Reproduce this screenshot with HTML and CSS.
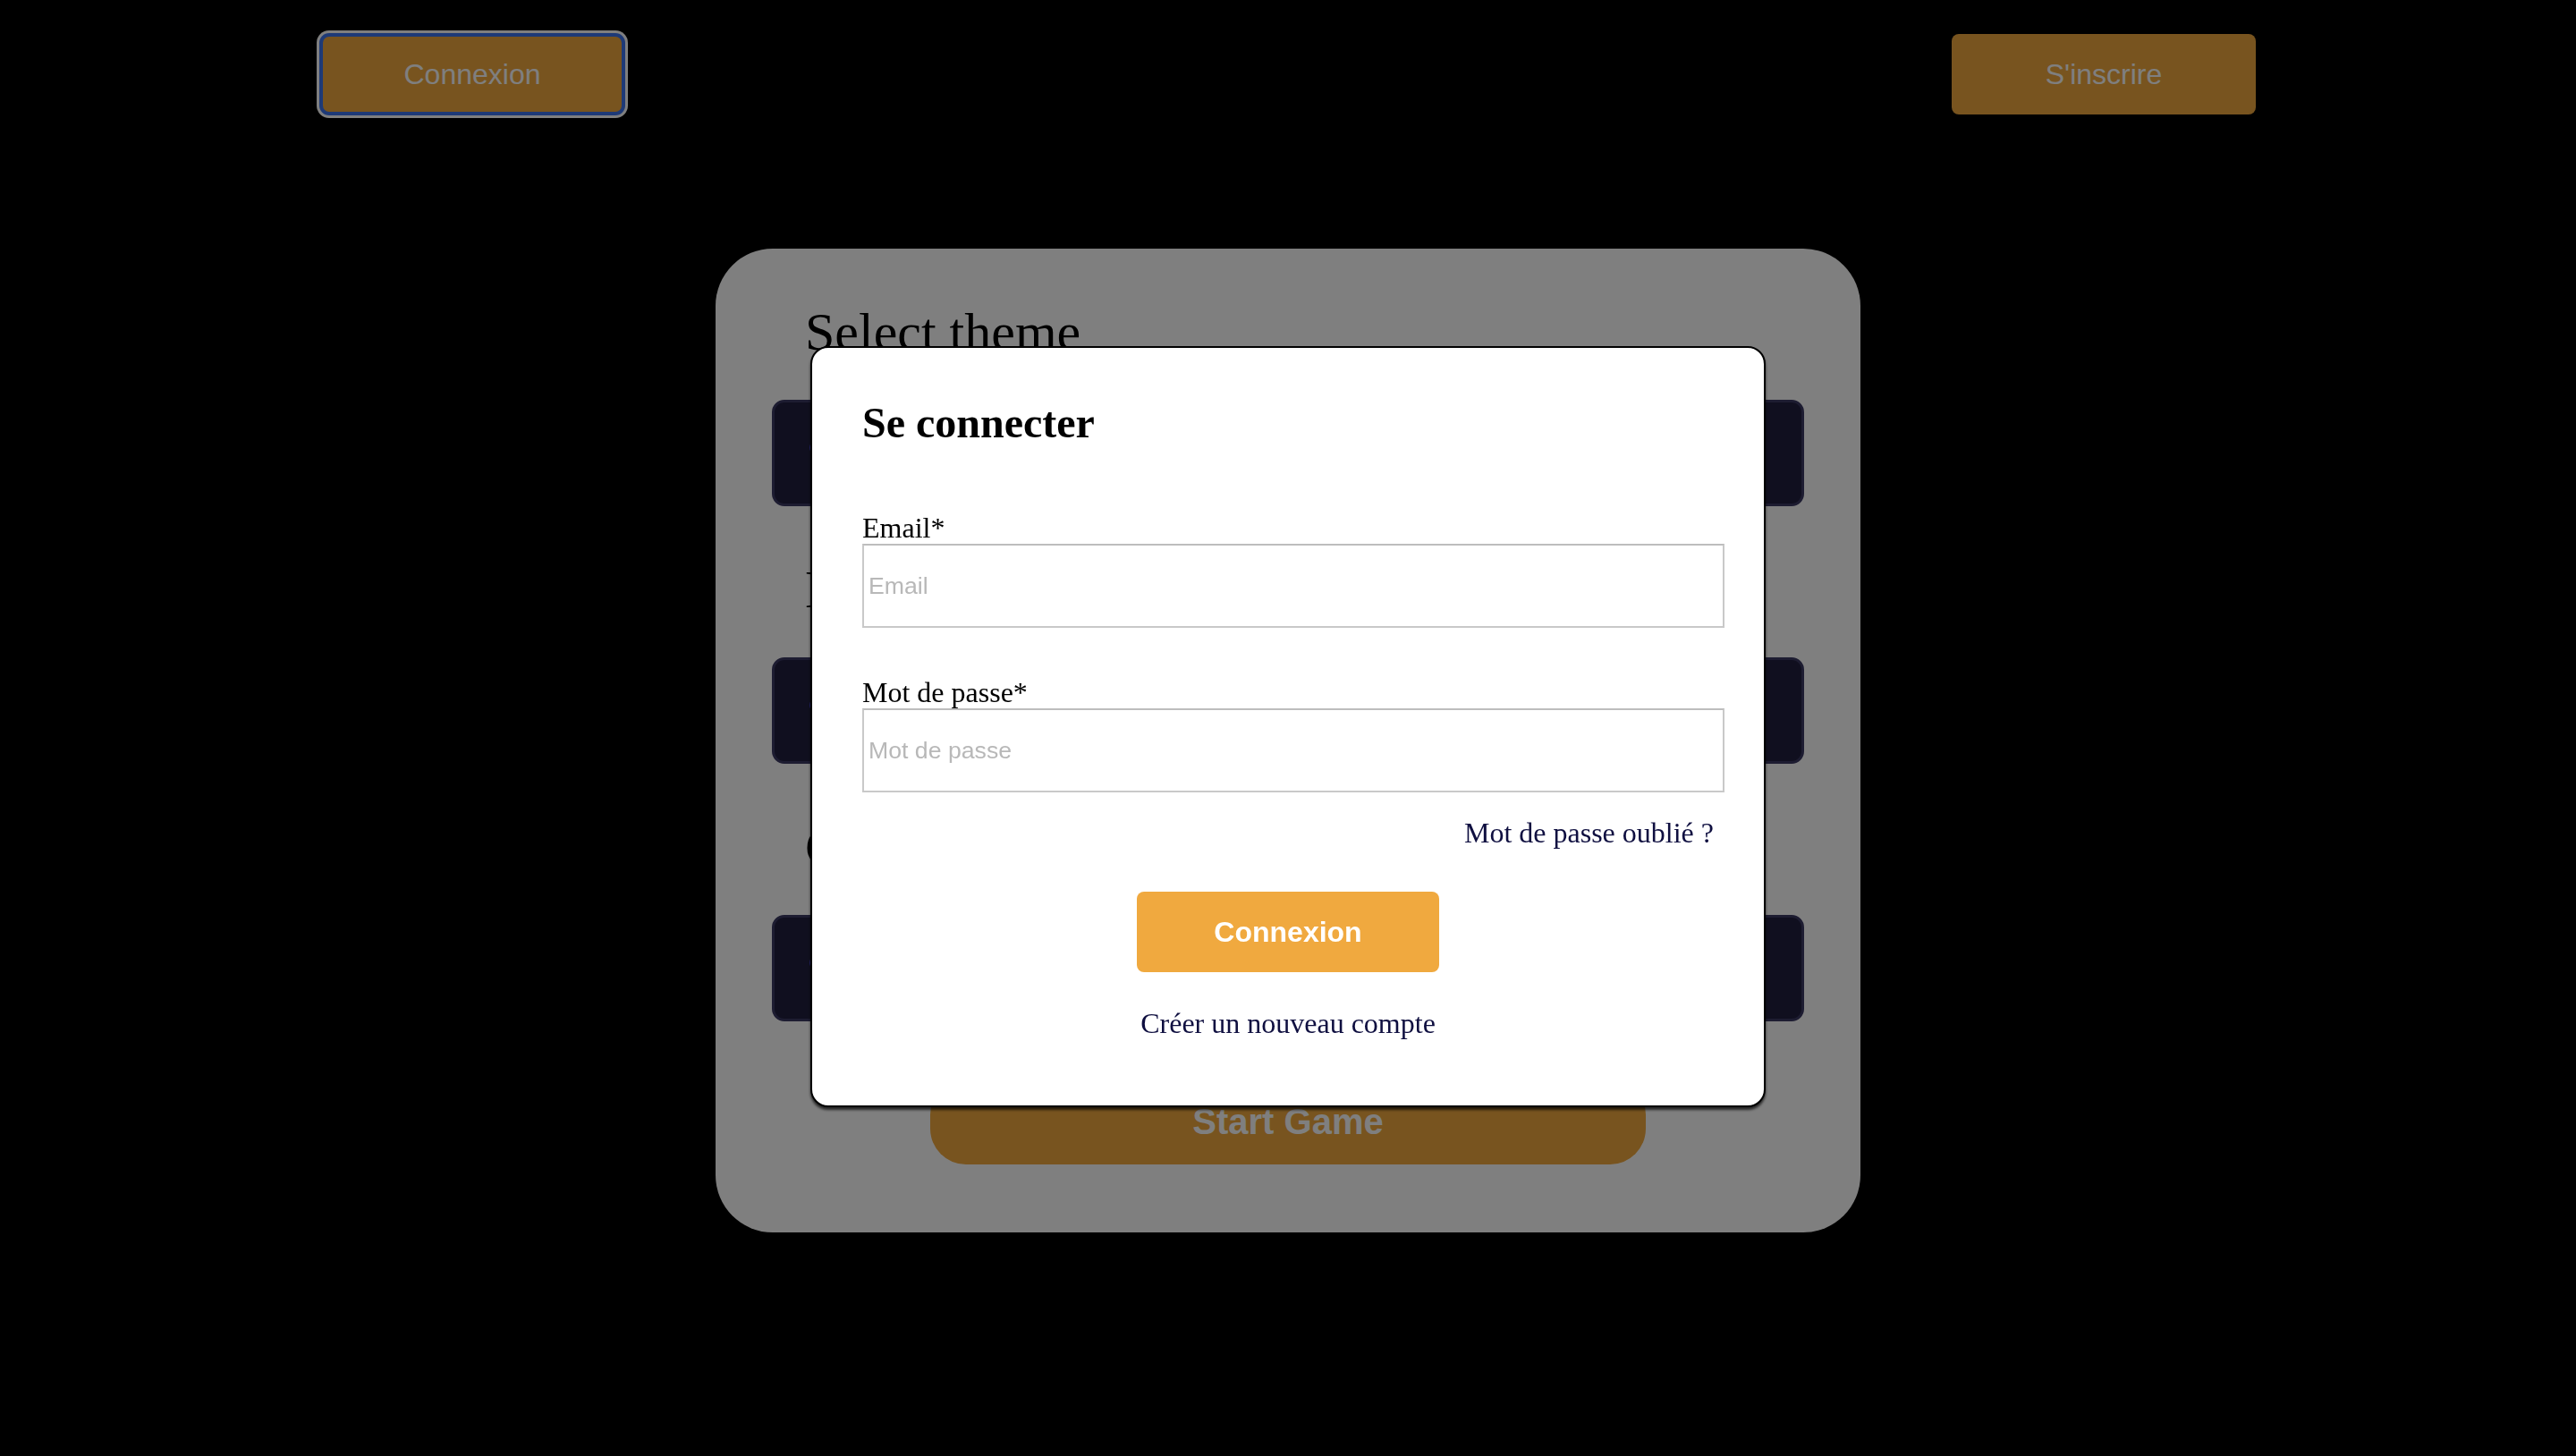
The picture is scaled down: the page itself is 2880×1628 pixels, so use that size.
FILE: index.html
```html
<!DOCTYPE html>
<html lang="fr">
<head>
<meta charset="utf-8">
<title>Quiz</title>
<link rel="stylesheet" href="styles.css">
</head>
<body>
<header class="topbar">
  <button class="top-btn is-focused" type="button">Connexion</button>
  <button class="top-btn" type="button">S'inscrire</button>
</header>

<main class="card">
  <h2 class="section-title">Select theme</h2>
  <button class="option" type="button" aria-label="theme"><span class="option-mark"></span></button>
  <h2 class="section-title">Difficulty</h2>
  <button class="option" type="button" aria-label="difficulty"><span class="option-mark"></span></button>
  <h2 class="section-title">Game mode</h2>
  <button class="option" type="button" aria-label="mode"><span class="option-mark"></span></button>
  <button class="start-btn" type="button">Start Game</button>
</main>

<div class="overlay">
  <div class="modal">
    <h2 class="modal-title">Se connecter</h2>
    <form class="login-form">
      <div class="field">
        <label class="field-label" for="email">Email*</label>
        <input class="field-input" id="email" type="email" placeholder="Email">
      </div>
      <div class="field">
        <label class="field-label" for="pwd">Mot de passe*</label>
        <input class="field-input" id="pwd" type="password" placeholder="Mot de passe">
      </div>
      <div class="forgot-row"><a class="link" href="#">Mot de passe oublié ?</a></div>
      <div class="submit-row"><button class="submit-btn" type="button">Connexion</button></div>
      <div class="create-row"><a class="link" href="#">Créer un nouveau compte</a></div>
    </form>
  </div>
</div>
</body>
</html>
```

FILE: styles.css
```css
* {
  box-sizing: border-box;
}

html, body {
  margin: 0;
  padding: 0;
}

body {
  background: #000;
  min-height: 100vh;
  font-family: "Liberation Serif", "Times New Roman", serif;
  color: #000;
}

/* ---------- top bar ---------- */
.topbar {
  width: 2164px;
  margin: 0 auto;
  padding-top: 38px;
  display: flex;
  justify-content: space-between;
}

.top-btn {
  width: 340px;
  height: 90px;
  padding: 0;
  border: none;
  border-radius: 8px;
  background: #f0a93f;
  color: #fff;
  font-family: "Liberation Sans", Arial, sans-serif;
  font-size: 32px;
  cursor: pointer;
}

.top-btn.is-focused {
  border: 3px solid #3d75ee;
  border-radius: 10px;
  box-shadow: 0 0 0 1px #3d75ee, 0 0 0 4px #ffffff;
}

/* ---------- game card ---------- */
.card {
  width: 1280px;
  margin: 150px auto 0;
  padding: 59px 63px 76px;
  background: #fff;
  border-radius: 64px;
}

.section-title {
  margin: 0 0 42px;
  padding-left: 37px;
  font-family: "Liberation Serif", "Times New Roman", serif;
  font-weight: normal;
  font-size: 60px;
  line-height: 68px;
}

.option {
  display: flex;
  align-items: center;
  width: 100%;
  height: 119px;
  margin: 0 0 59px;
  padding: 0 0 0 39px;
  background: #211f3f;
  border: 3px solid #3a3862;
  border-radius: 14px;
  cursor: pointer;
}

.option:last-of-type {
  margin-bottom: 0;
}

.option-mark {
  display: block;
  width: 12px;
  height: 13px;
  margin-bottom: 12px;
  border-radius: 6px 0 0 6px;
  background: #4a46dc;
}

.start-btn {
  display: block;
  width: 800px;
  height: 96px;
  margin: 64px auto 0;
  padding: 0;
  border: none;
  border-radius: 40px;
  background: #f0a93f;
  color: #fff;
  font-family: "Liberation Sans", Arial, sans-serif;
  font-weight: bold;
  font-size: 40px;
  cursor: pointer;
}

/* ---------- modal ---------- */
.overlay {
  position: fixed;
  inset: 0;
  background: rgba(0, 0, 0, 0.5);
  display: flex;
  align-items: center;
  justify-content: center;
  padding-bottom: 3px;
}

.modal {
  width: 1068px;
  padding: 56px 56px 74px;
  background: #fff;
  border: 2px solid #000;
  border-radius: 20px;
  box-shadow: 0 3px 3px rgba(0, 0, 0, 0.7);
}

.modal-title {
  margin: 0 0 71px;
  font-family: "Liberation Serif", "Times New Roman", serif;
  font-weight: bold;
  font-size: 48px;
  line-height: 56px;
}

.login-form {
  margin: 0;
}

.field {
  margin-bottom: 54px;
}

.field:nth-child(2) {
  margin-bottom: 27px;
}

.field-label {
  display: block;
  font-size: 32px;
  line-height: 36px;
}

.field-input {
  display: block;
  width: 964px;
  height: 94px;
  margin: 0;
  padding: 0 0 0 5px;
  border: 2px solid #c9c9c9;
  border-top-color: #bdbdbd;
  background: #fff;
  font-family: "Liberation Sans", Arial, sans-serif;
  font-size: 26.67px;
  color: #000;
}

.field-input::placeholder {
  color: #b8b8b8;
}

.forgot-row {
  text-align: right;
  font-size: 32px;
  line-height: 36px;
}

.link {
  color: #0f0f40;
  text-decoration: none;
}

.submit-row {
  display: flex;
  justify-content: center;
  margin-top: 48px;
}

.submit-btn {
  width: 338px;
  height: 90px;
  padding: 0;
  border: none;
  border-radius: 8px;
  background: #f0a93f;
  color: #fff;
  font-family: "Liberation Sans", Arial, sans-serif;
  font-weight: bold;
  font-size: 32px;
  cursor: pointer;
}

.create-row {
  margin-top: 39px;
  text-align: center;
  font-size: 32px;
  line-height: 36px;
}
```
